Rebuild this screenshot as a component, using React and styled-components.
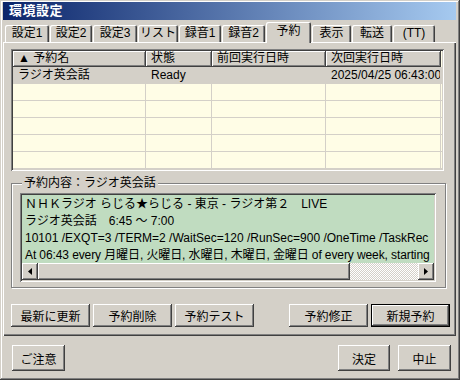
import styled, { createGlobalStyle, css } from 'styled-components';

const GlobalStyle = createGlobalStyle`
	html, body {
		margin: 0;
		padding: 0;
		background: #d4d0c8;
	}
	* {
		box-sizing: border-box;
	}
`;

const FONT = `'Liberation Sans', 'Noto Sans CJK JP', sans-serif`;

const raised = css`
	box-shadow: inset -1px -1px #404040, inset 1px 1px #ffffff,
		inset -2px -2px #808080, inset 2px 2px #d4d0c8;
`;

const sunken = css`
	box-shadow: inset 1px 1px #808080, inset -1px -1px #ffffff,
		inset 2px 2px #404040, inset -2px -2px #d4d0c8;
`;

const tabs = [
	{ label: '設定1', w: 44 },
	{ label: '設定2', w: 42 },
	{ label: '設定3', w: 44 },
	{ label: 'リスト', w: 40 },
	{ label: '録音1', w: 42 },
	{ label: '録音2', w: 43 },
	{ label: '予約', w: 45, active: true },
	{ label: '表示', w: 39 },
	{ label: '転送', w: 40 },
	{ label: '(TT)', w: 42 },
];

const columns = [
	{ label: '▲ 予約名', w: 133 },
	{ label: '状態', w: 66 },
	{ label: '前回実行日時', w: 114 },
	{ label: '次回実行日時', w: 115 },
];

const rows = [
	['ラジオ英会話', 'Ready', '', '2025/04/25 06:43:00'],
	['', '', '', ''],
	['', '', '', ''],
	['', '', '', ''],
	['', '', '', ''],
	['', '', '', ''],
];

const detailLines = [
	{ text: 'ＮＨＫラジオ らじる★らじる - 東京 - ラジオ第２　LIVE' },
	{ text: 'ラジオ英会話　6:45 ～ 7:00' },
	{ text: '10101 /EXQT=3 /TERM=2 /WaitSec=120 /RunSec=900 /OneTime /TaskRec' },
	{
		text: 'At 06:43 every 月曜日, 火曜日, 水曜日, 木曜日, 金曜日 of every week, starting',
		tight: true,
	},
];

const actions = [
	{ label: '最新に更新' },
	{ label: '予約削除' },
	{ label: '予約テスト' },
	{ label: '予約修正', push: true },
	{ label: '新規予約', isDefault: true },
];

const App = () => {
	return (
		<>
			<GlobalStyle />
			<Window>
				<TitleBar>環境設定</TitleBar>
				<Body>
					<TabStrip>
						{tabs.map((t, i) => (
							<Tab key={i} w={t.w} active={t.active}>
								{t.label}
							</Tab>
						))}
					</TabStrip>
					<Panel>
						<ListView>
							<HeaderRow>
								{columns.map((c, i) => (
									<HeaderCell key={i} w={c.w}>
										{c.label}
									</HeaderCell>
								))}
							</HeaderRow>
							{rows.map((r, i) => (
								<Row key={i} selected={i === 0}>
									{r.map((cell, j) => (
										<Cell key={j} w={columns[j].w}>
											{cell}
										</Cell>
									))}
								</Row>
							))}
						</ListView>

						<Group>
							<Legend>予約内容：ラジオ英会話</Legend>
							<DetailBox>
								<DetailText>
									{detailLines.map((l, i) => (
										<Line key={i} tight={l.tight}>
											{l.text}
										</Line>
									))}
								</DetailText>
								<HScroll>
									<ArrowBtn>
										<svg width='4' height='7' viewBox='0 0 4 7'>
											<path d='M4 0 L0 3.5 L4 7 Z' fill='#000' />
										</svg>
									</ArrowBtn>
									<Thumb />
									<Track />
									<ArrowBtn>
										<svg width='4' height='7' viewBox='0 0 4 7'>
											<path d='M0 0 L4 3.5 L0 7 Z' fill='#000' />
										</svg>
									</ArrowBtn>
								</HScroll>
							</DetailBox>
						</Group>

						<ActionRow>
							{actions.map((a, i) => (
								<Button
									key={i}
									w={79}
									h={23}
									push={a.push}
									isDefault={a.isDefault}
								>
									{a.label}
								</Button>
							))}
						</ActionRow>
					</Panel>
					<Footer>
						<Button w={53} h={26}>
							ご注意
						</Button>
						<FooterRight>
							<Button w={52} h={26}>
								決定
							</Button>
							<Button w={53} h={26}>
								中止
							</Button>
						</FooterRight>
					</Footer>
				</Body>
			</Window>
		</>
	);
};

const Window = styled.div`
	width: 460px;
	height: 380px;
	background: #d4d0c8;
	font-family: ${FONT};
	font-size: 12px;
	color: #000;
	padding: 2px 4px 3px 2px;
	display: flex;
	flex-direction: column;
	box-shadow: inset -1px -1px #404040, inset 1px 1px #d4d0c8,
		inset -2px -2px #808080, inset 2px 2px #ffffff;
`;

const TitleBar = styled.div`
	height: 18px;
	margin-left: 1px;
	background: linear-gradient(to right, #0a246a, #a6caf0);
	color: #fff;
	font-weight: bold;
	font-size: 13px;
	line-height: 18px;
	padding-left: 6px;
	letter-spacing: 0.5px;
`;

const Body = styled.div`
	flex: 1;
	display: flex;
	flex-direction: column;
	padding: 2px 0 0 1px;
`;

const TabStrip = styled.div`
	display: flex;
	align-items: flex-end;
	height: 20px;
	padding-left: 1px;
	position: relative;
	z-index: 1;
`;

const Tab = styled.div`
	width: ${({ w }) => w}px;
	height: ${({ active }) => (active ? 21 : 17)}px;
	margin-left: 1px;
	padding-top: ${({ active }) => (active ? 2 : 1)}px;
	text-align: center;
	background: #d4d0c8;
	font-size: 12px;
	line-height: 15px;
	white-space: nowrap;
	border-radius: 2px 2px 0 0;
	box-shadow: inset 1px 1px #ffffff, inset -1px 0 #404040, inset -2px 0 #808080;
	${({ active }) =>
		active &&
		css`
			margin-bottom: -1px;
			position: relative;
			z-index: 2;
		`}
`;

const Panel = styled.div`
	height: 294px;
	display: flex;
	flex-direction: column;
	padding: 7px 6px 0 8px;
	box-shadow: inset 1px 1px #ffffff, inset -1px -1px #404040,
		inset -2px -2px #808080;
`;

const ListView = styled.div`
	height: 122px;
	width: 433px;
	padding: 2px;
	background: #fffde6;
	${sunken};
	overflow: hidden;
`;

const HeaderRow = styled.div`
	display: flex;
	height: 16px;
`;

const HeaderCell = styled.div`
	width: ${({ w }) => w}px;
	flex-shrink: 0;
	height: 16px;
	line-height: 15px;
	padding-left: 5px;
	background: #d4d0c8;
	white-space: nowrap;
	overflow: hidden;
	${raised};
`;

const Row = styled.div`
	display: flex;
	height: 17px;
	background: ${({ selected }) => (selected ? '#d4d0c8' : '#fffde6')};
	border-bottom: 1px solid #d4d0c8;
`;

const Cell = styled.div`
	width: ${({ w }) => w}px;
	flex-shrink: 0;
	line-height: 17px;
	padding-left: 5px;
	white-space: nowrap;
	overflow: hidden;
	color: #000;
	border-right: 1px solid #d4d0c8;
`;

const Group = styled.fieldset`
	margin: 6px 0 0 0;
	width: 435px;
	height: 111px;
	padding: 3px 9px 0 8px;
	border: 1px solid #808080;
	box-shadow: inset 1px 1px #ffffff, 1px 1px #ffffff;
	min-width: 0;
`;

const Legend = styled.legend`
	margin-left: 2px;
	padding: 0 2px;
	background: #d4d0c8;
	line-height: 13px;
	font-size: 12px;
`;

const DetailBox = styled.div`
	width: 416px;
	height: 89px;
	padding: 2px;
	background: #c0dcc0;
	display: flex;
	flex-direction: column;
	${sunken};
`;

const DetailText = styled.div`
	flex: 1;
	overflow: hidden;
	padding: 1px 0 0 3px;
`;

const Line = styled.div`
	line-height: 17px;
	height: 17px;
	white-space: nowrap;
	letter-spacing: ${({ tight }) => (tight ? '-0.1px' : '0')};
`;

const HScroll = styled.div`
	height: 17px;
	display: flex;
	flex-shrink: 0;
`;

const ArrowBtn = styled.div`
	width: 16px;
	height: 17px;
	background: #d4d0c8;
	display: flex;
	align-items: center;
	justify-content: center;
	${raised};
`;

const Thumb = styled.div`
	width: 312px;
	height: 17px;
	background: #d4d0c8;
	${raised};
`;

const Track = styled.div`
	flex: 1;
	height: 17px;
	background-color: #d4d0c8;
	background-image: conic-gradient(
		#ffffff 25%,
		#d4d0c8 0 50%,
		#ffffff 0 75%,
		#d4d0c8 0
	);
	background-size: 2px 2px;
`;

const ActionRow = styled.div`
	display: flex;
	gap: 3px;
	margin-top: 16px;
`;

const Button = styled.div`
	width: ${({ w }) => w}px;
	height: ${({ h }) => h}px;
	flex-shrink: 0;
	display: flex;
	align-items: center;
	justify-content: center;
	background: #d4d0c8;
	font-size: 12px;
	${raised};
	${({ push }) =>
		push &&
		css`
			margin-left: auto;
		`}
	${({ isDefault }) =>
		isDefault &&
		css`
			box-shadow: inset 0 0 0 1px #000, inset -2px -2px #404040,
				inset 2px 2px #ffffff, inset -3px -3px #808080;
		`}
`;

const Footer = styled.div`
	display: flex;
	align-items: flex-start;
	padding: 9px 5px 0 9px;
`;

const FooterRight = styled.div`
	margin-left: auto;
	display: flex;
	gap: 8px;
`;

export default App;
